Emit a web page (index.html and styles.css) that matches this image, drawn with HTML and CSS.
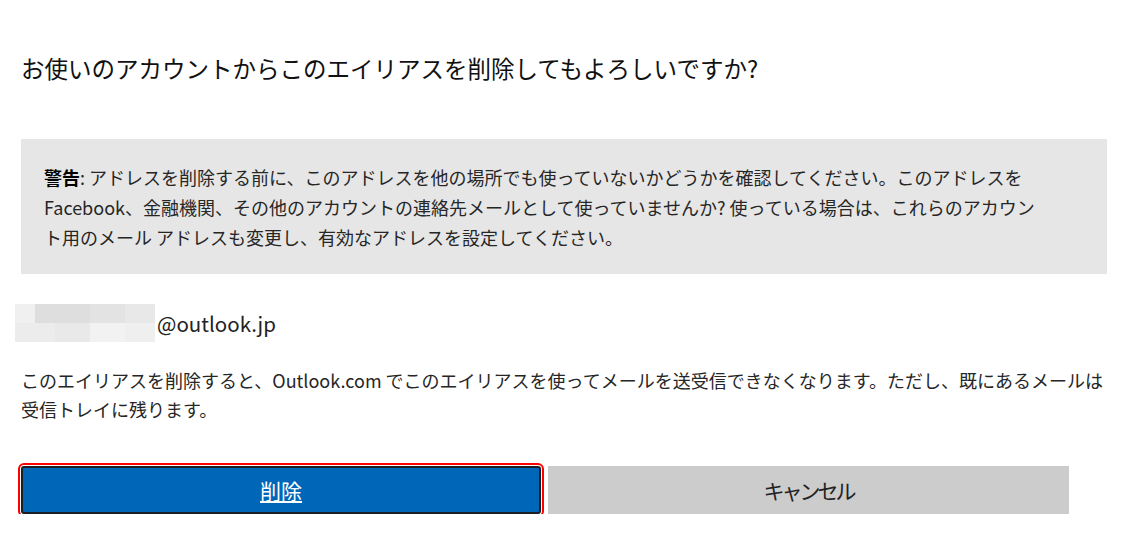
FILE: index.html
```html
<!DOCTYPE html>
<html lang="ja">
<head>
    <meta charset="UTF-8">
    <meta name="viewport" content="width=device-width, initial-scale=1.0">
    <title>エイリアスの削除</title>
    <link rel="stylesheet" href="styles.css">
</head>
<body>

    <div class="dialog">
        <h1>お使いのアカウントからこのエイリアスを削除してもよろしいですか?</h1>

        <div class="warning">
            <b>警告</b>: アドレスを削除する前に、このアドレスを他の場所でも使っていないかどうかを確認してください。このアドレスを<br>
            Facebook、金融機関、その他のアカウントの連絡先メールとして使っていませんか? 使っている場合は、これらのアカウン<br>
            ト用のメール アドレスも変更し、有効なアドレスを設定してください。
        </div>

        <div class="alias">
            <div class="blur">
                <span class="b1"></span><span class="b2"></span><span class="b3"></span><span class="b4"></span>
                <span class="b5"></span><span class="b6"></span><span class="b7"></span><span class="b8"></span>
            </div>
            <span class="domain">@outlook.jp</span>
        </div>

        <p class="note">
            このエイリアスを削除すると、Outlook.com でこのエイリアスを使ってメールを送受信できなくなります。ただし、既にあるメールは<br>
            受信トレイに残ります。
        </p>

        <div class="buttons">
            <button class="btn btn-primary"><u>削除</u></button>
            <button class="btn btn-cancel">キャンセル</button>
        </div>
    </div>

</body>
</html>
```
FILE: styles.css
```css
body {
    margin: 0;
    background-color: #fff;
    color: #262626;
    font-family: "Noto Sans CJK JP", sans-serif;
}
.dialog {
    padding: 0 19px 0 21px;
}
h1 {
    margin: 53px 0 0;
    font-size: 23.5px;
    line-height: 30px;
    font-weight: normal;
    color: #111;
    white-space: nowrap;
}
.warning {
    margin-top: 56px;
    background-color: #e6e6e6;
    padding: 23px 10px 22px 23px;
    font-size: 18px;
    line-height: 30px;
    white-space: nowrap;
}
.warning b {
    color: #000;
}
.alias {
    margin: 30px 0 0 -6px;
    display: flex;
    align-items: center;
    height: 38px;
}
.blur {
    width: 140px;
    height: 38px;
    display: grid;
    grid-template-columns: 20px 20px 35px 18px 17px 30px;
    grid-template-rows: 19px 19px;
}
.blur span {
    display: block;
}
.b1 { background: #f0f0f0; }
.b2 { background: #dedede; grid-column: span 2; }
.b3 { background: #e3e3e3; grid-column: span 2; }
.b4 { background: #e8e8e8; }
.b5 { background: #ececec; grid-column: span 2; }
.b6 { background: #e9e9e9; }
.b7 { background: #f2f2f2; grid-column: span 2; }
.b8 { background: #efefef; }
.domain {
    margin-left: 2px;
    font-size: 20.5px;
    color: #222;
}
.note {
    margin: 24px 0 0;
    font-size: 18px;
    line-height: 29px;
    white-space: nowrap;
}
.buttons {
    margin-top: 42px;
    display: grid;
    grid-template-columns: 520px 521px;
    gap: 7px;
}
.btn {
    height: 48px;
    font-family: inherit;
    font-size: 21px;
    border: none;
    padding: 0;
    cursor: pointer;
}
.btn-primary {
    background-color: #0067b8;
    color: #fff;
    border: 2px solid #1b1f24;
    border-radius: 3px;
    outline: 2px solid #ff0000;
    outline-offset: 1px;
}
.btn-cancel {
    background-color: #cccccc;
    color: #222;
    letter-spacing: -3px;
}
```
